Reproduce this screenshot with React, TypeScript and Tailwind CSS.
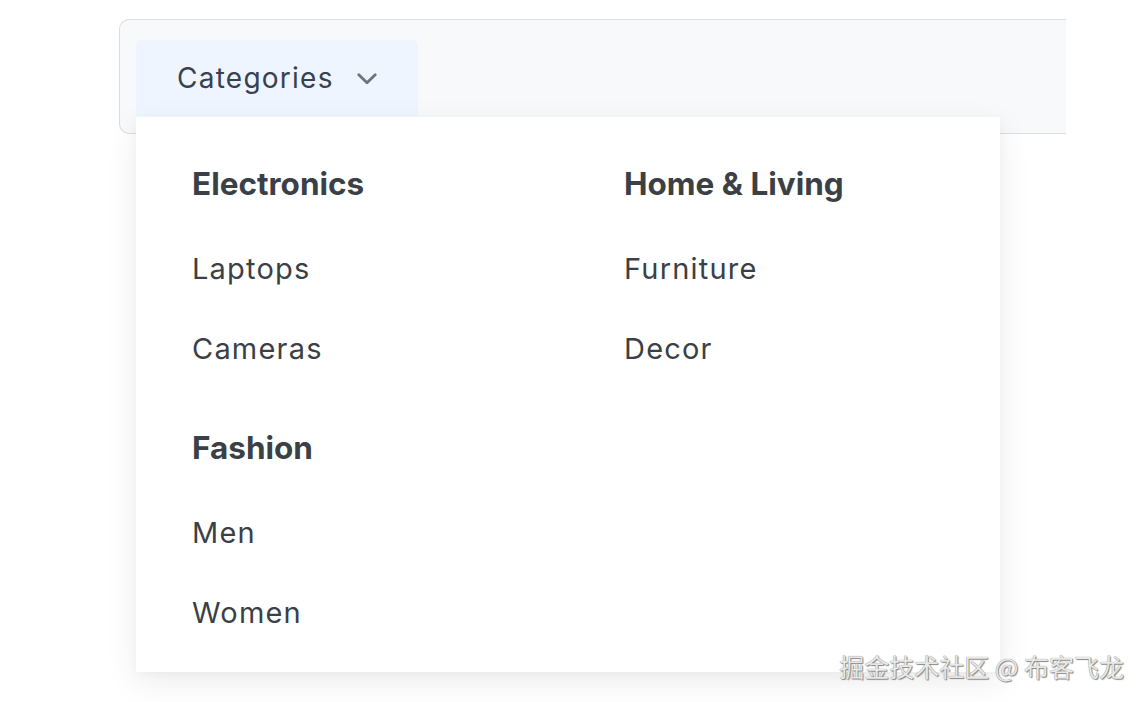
import React from "react";

const sections: { col: number; title: string; items: string[] }[][] = [
  [
    { col: 0, title: "Electronics", items: ["Laptops", "Cameras"] },
    { col: 0, title: "Fashion", items: ["Men", "Women"] },
  ],
  [{ col: 1, title: "Home & Living", items: ["Furniture", "Decor"] }],
];

function Chevron() {
  return (
    <svg width="20" height="12" viewBox="0 0 20 12" fill="none" className="ml-[23px] mt-[2px]">
      <path d="M1.8 1.8 L10 9.8 L18.2 1.8" stroke="#6b7280" strokeWidth="2.8" strokeLinecap="round" strokeLinejoin="round" />
    </svg>
  );
}

export default function App() {
  return (
    <div
      className="relative w-[1144px] h-[702px] overflow-hidden bg-white text-[#374151]"
      style={{ fontFamily: "Inter, 'Noto Sans', sans-serif" }}
    >
      <div className="relative ml-[119px] mt-[19px] w-[947px] h-[115px] border border-r-0 border-[#dcdde1] rounded-l-[10px] bg-[#f8f9fb] pl-[16px] pt-[20px]">
        <button className="flex items-center h-[76px] w-[282px] rounded-t-[6px] bg-[#eef5fe] pl-[41px] text-[28px] leading-[42px] tracking-[1.25px] text-[#374151]">
          <span>Categories</span>
          <Chevron />
        </button>

        <div className="absolute left-[16px] top-[97px] w-[864px] h-[555px] bg-white shadow-[0_10px_30px_rgba(0,0,0,0.08),0_2px_8px_rgba(0,0,0,0.03)] p-[28px] z-10">
          <div className="grid grid-cols-2 gap-x-[56px]">
            {sections.map((col, ci) => (
              <div key={ci} className="flex flex-col gap-[20px]">
                {col.map((s) => (
                  <div key={s.title} className="flex flex-col">
                    <div className="px-[28px] py-[15px] text-[31.5px] leading-[48px] font-bold text-[#3b3f46]">
                      {s.title}
                    </div>
                    <ul className="mt-[6px] flex flex-col">
                      {s.items.map((it) => (
                        <li key={it} className="px-[28px] py-[19px] text-[29px] leading-[42px] tracking-[1.2px] text-[#3b3f46]">
                          {it}
                        </li>
                      ))}
                    </ul>
                  </div>
                ))}
              </div>
            ))}
          </div>
        </div>
      </div>

      <div
        className="absolute right-[20px] bottom-[21px] z-20 text-[25px] leading-[30px] text-[#e9e9e9]"
        style={{
          fontFamily: "'Noto Sans CJK SC', 'Noto Sans', sans-serif",
          textShadow: "0 0 1px #6b6b6b, 1px 1px 1px #8a8a8a",
        }}
      >
        掘金技术社区 @ 布客飞龙
      </div>
    </div>
  );
}
